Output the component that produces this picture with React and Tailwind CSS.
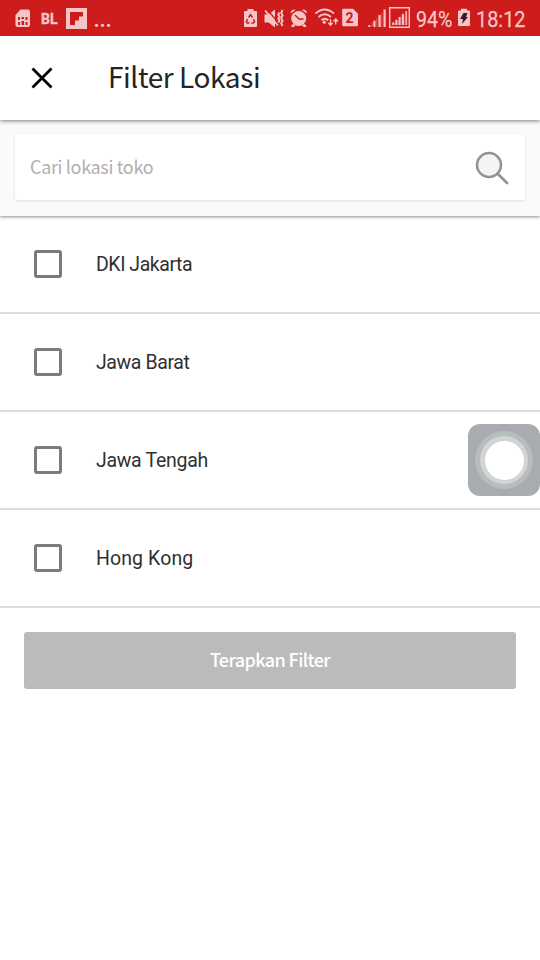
const PINK = "#f6c6c6";
const RED = "#ce1b1b";

function Glyph({ x, w, className = "", children }) {
  return (
    <svg
      width={w}
      height="36"
      viewBox={`${x} 0 ${w} 36`}
      fill={PINK}
      className={`block shrink-0 overflow-visible ${className}`}
      aria-hidden="true"
    >
      {children}
    </svg>
  );
}

function StatusBar() {
  return (
    <div className="flex h-9 shrink-0 items-center bg-[#ce1b1b] pl-[15px] pr-[15px]">
      <Glyph x={15} w={15}>
        <path d="M20.500 9.500H28a2 2 0 0 1 2 2V25a2 2 0 0 1-2 2H17.500a2 2 0 0 1-2-2V15z" />
        <path d="M18 17h2v3h-2zM21.500 17h2.500v2h-2.500zM25.500 17h2v3h-2zM18 22h2v3h-2zM21.500 21h2.500v4h-2.500zM25.500 22h2v3h-2z" fill={RED} />
      </Glyph>
      <Glyph x={41} w={17} className="ml-[11px]">
        <text x="41" y="23.500" fontFamily="Roboto, sans-serif" fontSize="14.500" fontWeight="700" textLength="16.500" lengthAdjust="spacingAndGlyphs" stroke={PINK} strokeWidth="0.400">BL</text>
      </Glyph>
      <Glyph x={66} w={21} className="ml-2">
        <path d="M66 8h21v21H66z" />
        <path d="M70 12h13v4.500h-4v4h-4V25h-5z" fill={RED} />
      </Glyph>
      <Glyph x={95} w={16} className="ml-2">
        <circle cx="96.500" cy="25.300" r="1.600" />
        <circle cx="102.500" cy="25.300" r="1.600" />
        <circle cx="108.500" cy="25.300" r="1.600" />
      </Glyph>

      <Glyph x={244} w={13} className="ml-auto">
        <path d="M247.500 9h6v2h2.500q1 0 1 1v14q0 1-1 1h-11q-1 0-1-1V12q0-1 1-1h2.500z" />
        <path d="M248.600 17.500l1.900-2.800 1.900 2.800M253.600 19.200l1 2.500-1.200 1.300h-2M249.500 23h-2.200l-1-1.400 1.300-2.400" fill="none" stroke={RED} strokeWidth="1.500" />
      </Glyph>
      <Glyph x={264} w={20} className="ml-[7px]">
        <path d="M264.500 14.500h4l6.500-5v18l-6.500-5h-4z" />
        <path d="M266.500 8.500l12 14.500" stroke={RED} strokeWidth="1.200" />
        <path d="M265 10.500l13 15" stroke={PINK} strokeWidth="1.900" />
        <path d="M279.500 12.500l-1.200 2 1.200 2-1.200 2 1.200 2-1.200 2M282.600 10l-1.400 2.700 1.400 2.700-1.400 2.700 1.400 2.700-1.400 2.600 1.400 2.600" fill="none" stroke={PINK} strokeWidth="1.900" />
      </Glyph>
      <Glyph x={290} w={18} className="ml-[6px]">
        <circle cx="298.700" cy="18.500" r="7.500" />
        <path d="M290.500 13.500a3.500 3.500 0 0 1 5-3.500zM307 13.500a3.500 3.500 0 0 0-5-3.500zM292.500 24l-1.500 3h3l1.500-2zM305 24l1.500 3h-3l-1.500-2z" />
        <path d="M295 15l4 4h4.500" fill="none" stroke={RED} strokeWidth="1.400" />
      </Glyph>
      <Glyph x={315} w={24} className="ml-[7px]">
        <path d="M315.500 13.500Q324.500 5.500 334 13.500M318.500 17Q324.800 11.500 331 17M321.500 20.200Q324.800 17.200 328.200 20.200" fill="none" stroke={PINK} strokeWidth="1.900" />
        <circle cx="324.300" cy="22.200" r="1.600" />
        <path d="M330.500 19v6M328.300 22.800l2.200 2.400 2.200-2.400M335.700 24.500v-5M333.500 21.500l2.200-2.400 2.200 2.400" fill="none" stroke={PINK} strokeWidth="1.400" />
      </Glyph>
      <Glyph x={342} w={16} className="ml-[3px]">
        <path d="M343.500 8.700H353l5 5V25q0 1.300-1.300 1.300h-13q-1.500 0-1.500-1.500V10q0-1.300 1.300-1.300z" />
        <text x="345.400" y="22.800" fill={RED} fontFamily="Roboto, sans-serif" fontWeight="700" fontSize="14">2</text>
      </Glyph>
      <Glyph x={368} w={18} className="ml-[10px]">
        <path d="M368.300 25h2v2h-2zM373.300 20.700h2.200V27h-2.200zM378.400 15h2.200v12h-2.200zM383.500 9.500h2.200V27h-2.200z" />
        <path d="M371 23h1.500v4H371zM376 18h1.500v9H376zM381 13h1.500v14H381z" opacity="0.250" />
      </Glyph>
      <Glyph x={389} w={21} className="ml-[3px]">
        <path d="M389.700 7.700h19.600v19.600h-19.600z" fill="none" stroke={PINK} strokeWidth="1.400" />
        <path d="M392.200 22.500h2V25h-2zM395.400 19.800h2V25h-2zM398.600 17h2v8h-2zM401.900 13.800h2V25h-2z" />
        <path d="M405.200 11h2v14h-2z" opacity="0.800" />
        <path d="M394.200 21.500h11V25h-11zM400.600 15.500h4.600v6h-4.600z" opacity="0.200" />
      </Glyph>
      <Glyph x={417} w={35} className="ml-[7px]">
        <text x="416" y="27" fontFamily="Roboto, sans-serif" fontSize="22.500" textLength="36.500" lengthAdjust="spacingAndGlyphs" stroke={PINK} strokeWidth="0.250">94%</text>
      </Glyph>
      <Glyph x={458} w={12} className="ml-[6px]">
        <path d="M461 8.700h6v1.700h2q1 0 1 1V25q0 1-1 1h-10q-1 0-1-1V11.400q0-1 1-1h2z" />
        <path d="M463.500 13h4l-1.500 4h2l-6 7 1-5h-3z" fill="#41151c" />
      </Glyph>
      <Glyph x={477} w={48} className="ml-[7px]">
        <text x="476" y="27" fontFamily="Roboto, sans-serif" fontSize="22.500" textLength="49.500" lengthAdjust="spacingAndGlyphs" stroke={PINK} strokeWidth="0.250">18:12</text>
      </Glyph>
    </div>
  );
}

function LocationRow({ name, spacing }) {
  return (
    <label className="flex h-[98px] items-center border-b-2 border-[#dcdcdc] pl-[34px]">
      <span className="h-7 w-7 shrink-0 rounded-[3px] border-[3px] border-[#7b7b7b]" />
      <span className={`ml-[34px] text-[19.5px] leading-[25px] text-[#303030] ${spacing}`}>{name}</span>
    </label>
  );
}

const sans = "font-['Noto_Sans_CJK_SC',sans-serif]";

export default function App() {
  return (
    <div className="relative flex h-[960px] w-[540px] flex-col overflow-hidden bg-white font-[Roboto,sans-serif]">
      <StatusBar />
      <header className="z-10 flex h-[84px] shrink-0 items-center bg-white pl-[31px] shadow-[0_1px_4px_rgba(0,0,0,0.5)] [clip-path:inset(0_0_-8px_0)]">
        <svg width="22" height="22" viewBox="0 0 22 22" fill="none" stroke="#000" strokeWidth="2.800">
          <path d="M1.500 1.500l19 19M20.500 1.500l-19 19" />
        </svg>
        <h1 className={`ml-[55px] pb-[5px] text-[28px] leading-10 tracking-[-0.4px] text-[#242424] ${sans}`}>Filter Lokasi</h1>
      </header>
      <div className="h-24 shrink-0 bg-[#fafafa] px-[15px] pt-[14px] shadow-[0_1px_3px_rgba(0,0,0,0.45)]">
        <div className="flex h-[66px] items-center justify-between rounded-[2px] bg-white pl-[15px] pr-4 shadow-[0_1px_3px_rgba(0,0,0,0.1)]">
          <span className={`pb-0.5 text-[18px] leading-7 tracking-[-0.35px] text-[#b0b0b0] ${sans}`}>Cari lokasi toko</span>
          <svg className="mt-0.5" width="34" height="34" viewBox="0 0 34 34" stroke="#929292">
            <circle cx="14" cy="14" r="12" fill="#f4f4f4" strokeWidth="2.500" />
            <path d="M22.500 22.500l9.500 9.500" strokeWidth="2.700" strokeLinecap="round" />
          </svg>
        </div>
      </div>
      <main>
        <LocationRow name="DKI Jakarta" spacing="tracking-[-0.45px]" />
        <LocationRow name="Jawa Barat" spacing="tracking-[-0.4px]" />
        <LocationRow name="Jawa Tengah" spacing="tracking-[-0.3px]" />
        <LocationRow name="Hong Kong" spacing="tracking-[0.1px]" />
        <button className={`mx-6 mt-6 flex h-[57px] w-[492px] items-center justify-center rounded-[3px] bg-[#bbbbbb] pb-0.5 text-[18px] font-medium tracking-[-0.6px] text-white ${sans}`}>
          Terapkan Filter
        </button>
      </main>
      <div className="absolute left-[468px] top-[424px] flex h-[72px] w-[72px] items-center justify-center rounded-[12px] bg-[#a8acb1]">
        <div className="flex h-[58px] w-[58px] items-center justify-center rounded-full bg-[#b7bcbd]">
          <div className="flex h-12 w-12 items-center justify-center rounded-full bg-[#d2d4d5]">
            <div className="h-[39px] w-[39px] rounded-full bg-white" />
          </div>
        </div>
      </div>
    </div>
  );
}
